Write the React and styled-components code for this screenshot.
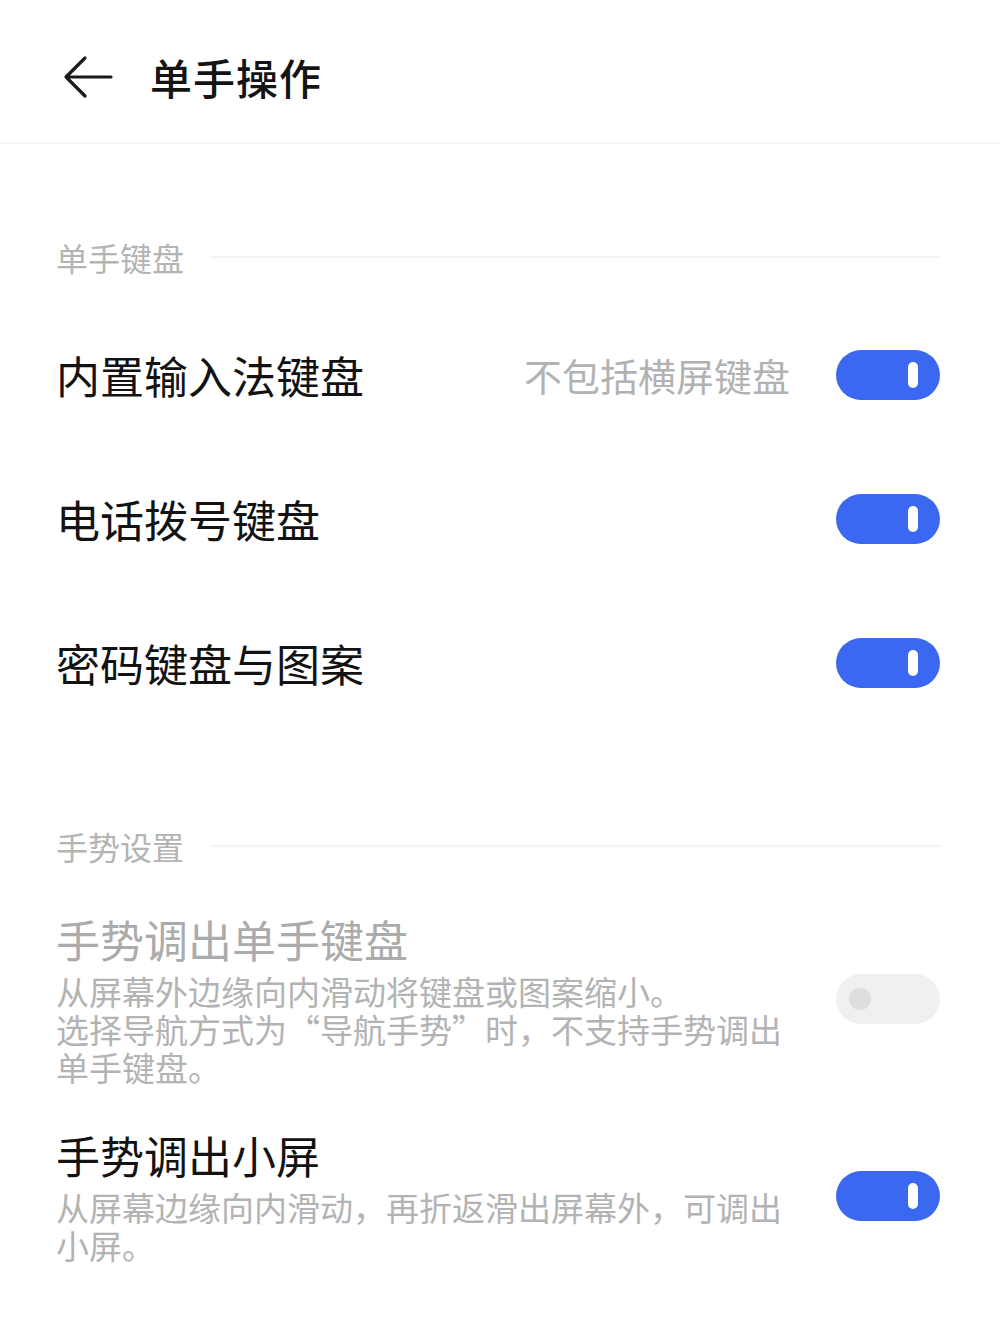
import React, { useState } from 'react';
import styled, { createGlobalStyle } from 'styled-components';

const GlobalStyle = createGlobalStyle`
  html, body {
    margin: 0;
    padding: 0;
    background: #fff;
  }
  body {
    font-family: "Noto Sans CJK SC", "Noto Sans", sans-serif;
    color: #111;
  }
`;

export default function App() {
  const [toggles, setToggles] = useState({
    builtin: true,
    dial: true,
    password: true,
    small: true,
  });

  const flip = (key) => setToggles((t) => ({ ...t, [key]: !t[key] }));

  return (
    <Page lang='zh-CN'>
      <GlobalStyle />
      <Header>
        <BackButton aria-label='返回'>
          <svg width='52' height='46' viewBox='0 0 52 46' fill='none'>
            <path
              d='M49 23H4M23 4L4 23l19 19'
              stroke='#1a1a1a'
              strokeWidth='3.2'
              strokeLinecap='round'
              strokeLinejoin='round'
            />
          </svg>
        </BackButton>
        <Title>单手操作</Title>
      </Header>

      <SectionHeader $top={93}>
        <SectionLabel>单手键盘</SectionLabel>
        <SectionLine />
      </SectionHeader>

      <Row>
        <RowTitle>内置输入法键盘</RowTitle>
        <RowHint>不包括横屏键盘</RowHint>
        <Switch $on={toggles.builtin} onClick={() => flip('builtin')} />
      </Row>
      <Row>
        <RowTitle>电话拨号键盘</RowTitle>
        <Switch $on={toggles.dial} onClick={() => flip('dial')} />
      </Row>
      <Row>
        <RowTitle>密码键盘与图案</RowTitle>
        <Switch $on={toggles.password} onClick={() => flip('password')} />
      </Row>

      <SectionHeader $top={91}>
        <SectionLabel>手势设置</SectionLabel>
        <SectionLine />
      </SectionHeader>

      <TallRow $top={19} $bottom={20}>
        <TextBlock>
          <RowTitle $disabled>手势调出单手键盘</RowTitle>
          <Description>
            <Line>从屏幕外边缘向内滑动将键盘或图案缩小。</Line>
            <Line>选择导航方式为“导航手势”时，不支持手势调出</Line>
            <Line>单手键盘。</Line>
          </Description>
        </TextBlock>
        <Switch $disabled disabled />
      </TallRow>

      <TallRow $top={21} $bottom={40}>
        <TextBlock>
          <RowTitle>手势调出小屏</RowTitle>
          <Description>
            <Line>从屏幕边缘向内滑动，再折返滑出屏幕外，可调出</Line>
            <Line>小屏。</Line>
          </Description>
        </TextBlock>
        <Switch $on={toggles.small} onClick={() => flip('small')} />
      </TallRow>
    </Page>
  );
}

const Page = styled.div`
  width: 1000px;
  min-height: 1337px;
  background: #fff;
`;

const Header = styled.header`
  height: 144px;
  border-bottom: 2px solid #f6f6f6;
  display: flex;
  align-items: center;
  padding-left: 62px;
  padding-top: 12px;
  box-sizing: border-box;
`;

const BackButton = styled.button`
  border: none;
  background: none;
  padding: 0;
  margin-right: 36px;
  display: flex;
  align-items: center;
  cursor: pointer;
`;

const Title = styled.h1`
  margin: 0;
  font-size: 42px;
  font-weight: 500;
  line-height: 56px;
  color: #141414;
  letter-spacing: 1px;
`;

const SectionHeader = styled.div`
  display: flex;
  align-items: center;
  gap: 26px;
  padding: ${(p) => p.$top}px 60px 26px 56px;
`;

const SectionLabel = styled.span`
  font-size: 32px;
  line-height: 40px;
  color: #b4b4b4;
`;

const SectionLine = styled.div`
  flex: 1;
  height: 2px;
  background: #f4f4f4;
`;

const Row = styled.div`
  height: 144px;
  display: flex;
  align-items: center;
  padding: 0 60px 0 56px;
`;

const TallRow = styled.div`
  display: flex;
  align-items: center;
  padding: ${(p) => p.$top}px 60px ${(p) => p.$bottom}px 56px;
`;

const TextBlock = styled.div`
  flex: 1;
  display: flex;
  flex-direction: column;
  gap: 5px;
`;

const RowTitle = styled.div`
  flex: 1;
  font-size: 44px;
  line-height: 56px;
  color: ${(p) => (p.$disabled ? '#ababab' : '#121212')};
  white-space: nowrap;
`;

const RowHint = styled.span`
  font-size: 38px;
  line-height: 50px;
  color: #b2b2b2;
  margin-right: 46px;
  white-space: nowrap;
`;

const Description = styled.div`
  display: flex;
  flex-direction: column;
  font-size: 33px;
  color: #b3b3b3;
`;

const Line = styled.span`
  height: 38px;
  line-height: 38px;
  white-space: nowrap;
`;

const Switch = styled.button`
  position: relative;
  flex-shrink: 0;
  width: 104px;
  height: 50px;
  border-radius: 25px;
  border: none;
  padding: 0;
  background: ${(p) => (p.$disabled ? '#f0f0f0' : p.$on ? '#3b68f0' : '#d9d9d9')};
  cursor: ${(p) => (p.$disabled ? 'default' : 'pointer')};

  &::after {
    content: '';
    position: absolute;
    top: 50%;
    transform: translateY(-50%);
    ${(p) =>
      p.$disabled
        ? `left: 13px; width: 22px; height: 22px; border-radius: 50%; background: #dddddd;`
        : p.$on
        ? `right: 22px; width: 10px; height: 26px; border-radius: 5px; background: #fff;`
        : `left: 13px; width: 22px; height: 22px; border-radius: 50%; background: #fff;`}
  }
`;
